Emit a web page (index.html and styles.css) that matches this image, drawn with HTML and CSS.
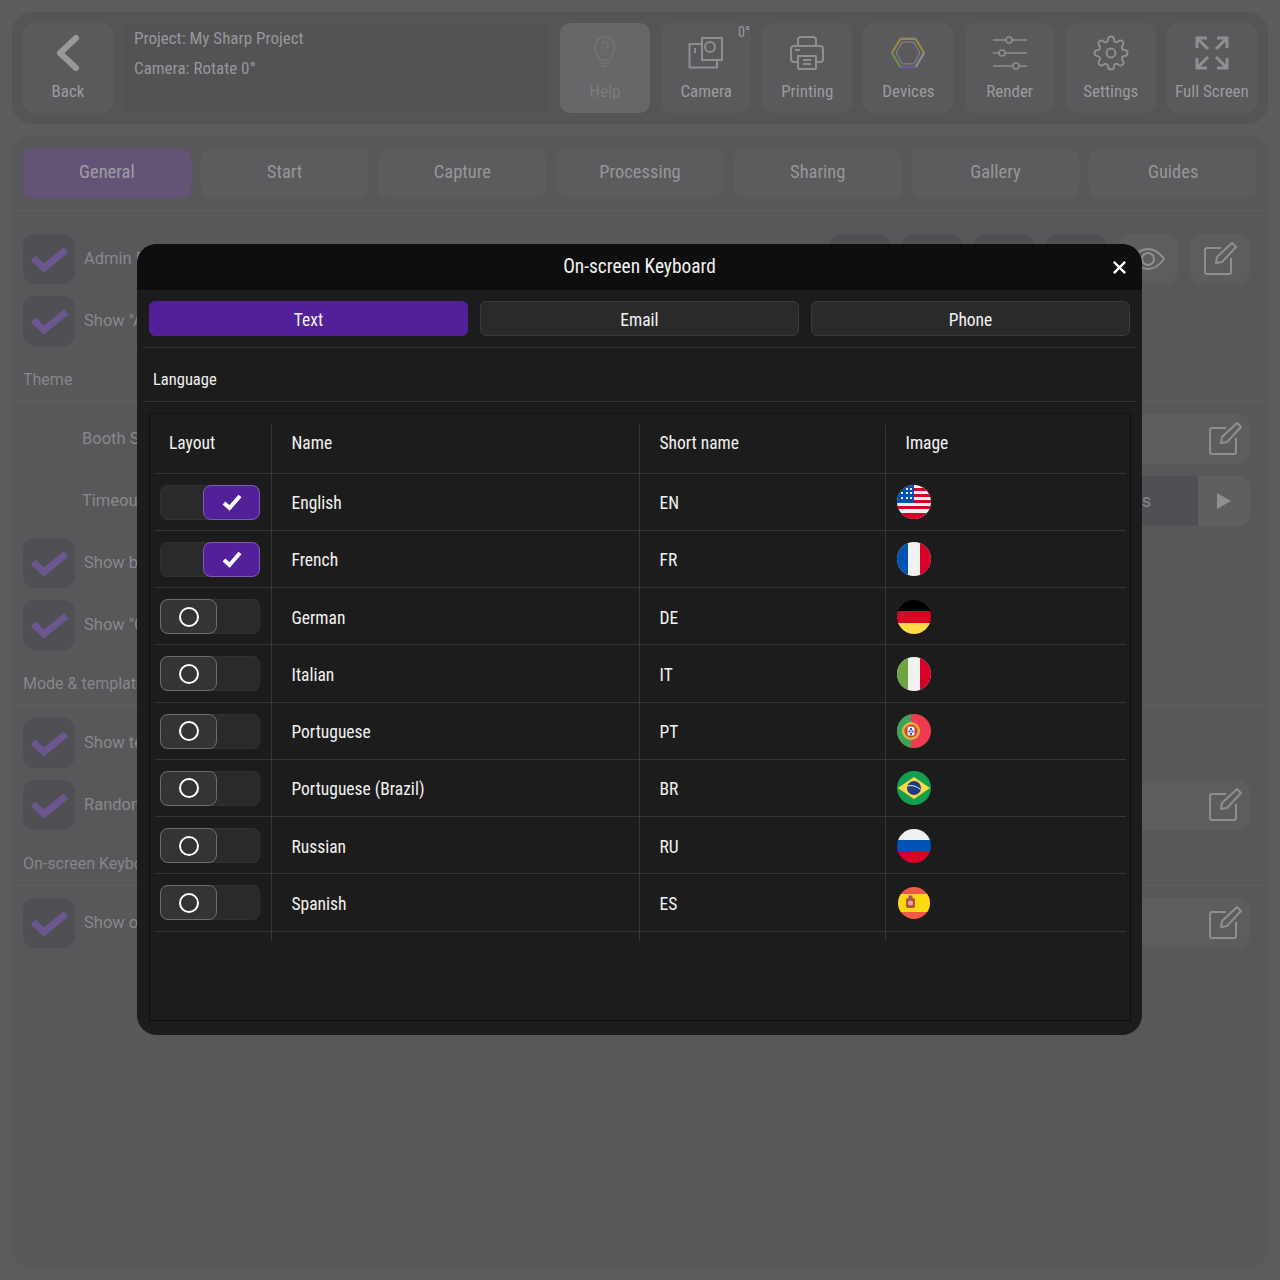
FILE: index.html
```html
<!DOCTYPE html>
<html lang="en">
<head>
<meta charset="utf-8">
<title>On-screen Keyboard</title>
<link rel="stylesheet" href="styles.css">
</head>
<body>
<div class="app">
  <header class="topbar">
    <div class="tool back">
      <svg class="ico" viewBox="0 0 36 36"><path d="M26 3 L10 18 L26 33" class="chev"/></svg>
      <span>Back</span>
    </div>
    <div class="info">
      <div>Project: My Sharp Project</div>
      <div>Camera: Rotate 0°</div>
    </div>
    <div class="tools">
      <div class="tool help">
        <svg class="ico" viewBox="0 0 36 36"><path d="M13 25c0-3-5-6-5-13a10 10 0 0 1 20 0c0 7-5 10-5 13z"/><path d="M13 28h10M14 31h8M18 31v3M15 9.500a3 3 0 1 1 4.500 3c-1 .7-1.500 1.300-1.500 2.500M18 18v1"/></svg>
        <span>Help</span>
      </div>
      <div class="tool">
        <svg class="ico" viewBox="0 0 36 36"><path d="M1.500 9h12.500V3h20v22h-5v7.500H1.500z"/><path d="M14 9v16h15M7 13v5"/><circle cx="22" cy="12" r="5"/></svg>
        <span>Camera</span>
        <em class="deg">0°</em>
      </div>
      <div class="tool">
        <svg class="ico" viewBox="0 0 36 36"><path d="M9 11V5a3 3 0 0 1 3-3h12a3 3 0 0 1 3 3v6"/><path d="M9 27H5a3 3 0 0 1-3-3V14a3 3 0 0 1 3-3h26a3 3 0 0 1 3 3v10a3 3 0 0 1-3 3h-4"/><path d="M9 21h18v12a1 1 0 0 1-1 1H10a1 1 0 0 1-1-1zM14 25h8M14 29h8M6 15h5"/></svg>
        <span>Printing</span>
      </div>
      <div class="tool">
        <svg class="ico hex" viewBox="-1 -1 38 38">
          <path class="h1" d="M10 3h16"/><path class="h2" d="M26 3l9 15"/><path class="h3" d="M35 18l-9 15"/><path class="h4" d="M26 33H10"/><path class="h5" d="M10 33L1 18"/><path class="h6" d="M1 18L10 3"/>
          <path class="h7" d="M12 6.500h12l6.500 11.500L24 29.500H12L5.500 18z"/>
        </svg>
        <span>Devices</span>
      </div>
      <div class="tool">
        <svg class="ico fine" viewBox="0 0 36 36"><path d="M1 5h13M20 5h15M1 18h6M13 18h22M1 31h20M27 31h8"/><circle cx="17" cy="5" r="3"/><circle cx="10" cy="18" r="3"/><circle cx="24" cy="31" r="3"/></svg>
        <span>Render</span>
      </div>
      <div class="tool">
        <svg class="ico" viewBox="0 0 24 24"><circle cx="12" cy="12" r="3" class="thin"/><path class="thin" d="M19.400 15a1.650 1.650 0 0 0 .33 1.820l.06.06a2 2 0 0 1 0 2.830 2 2 0 0 1-2.830 0l-.06-.06a1.650 1.650 0 0 0-1.820-.33 1.650 1.650 0 0 0-1 1.510V21a2 2 0 0 1-2 2 2 2 0 0 1-2-2v-.09A1.650 1.650 0 0 0 9 19.400a1.650 1.650 0 0 0-1.820.33l-.06.06a2 2 0 0 1-2.830 0 2 2 0 0 1 0-2.830l.06-.06a1.650 1.650 0 0 0 .33-1.820 1.650 1.650 0 0 0-1.510-1H3a2 2 0 0 1-2-2 2 2 0 0 1 2-2h.09A1.650 1.650 0 0 0 4.600 9a1.650 1.650 0 0 0-.33-1.820l-.06-.06a2 2 0 0 1 0-2.830 2 2 0 0 1 2.830 0l.06.06a1.650 1.650 0 0 0 1.820.33H9a1.650 1.650 0 0 0 1-1.510V3a2 2 0 0 1 2-2 2 2 0 0 1 2 2v.09a1.650 1.650 0 0 0 1 1.510 1.650 1.650 0 0 0 1.820-.33l.06-.06a2 2 0 0 1 2.830 0 2 2 0 0 1 0 2.830l-.06.06a1.650 1.650 0 0 0-.33 1.820V9a1.650 1.650 0 0 0 1.510 1H21a2 2 0 0 1 2 2 2 2 0 0 1-2 2h-.09a1.650 1.650 0 0 0-1.510 1z"/></svg>
        <span>Settings</span>
      </div>
      <div class="tool">
        <svg class="ico" viewBox="0 0 36 36"><path class="bold" d="M3 13V3h10M3 3l11 11M23 3h10v10M33 3L22 14M3 23v10h10M3 33l11-11M33 23v10H23M33 33L22 22"/></svg>
        <span>Full Screen</span>
      </div>
    </div>
  </header>

  <main class="settings">
    <nav class="tabs">
      <div class="tab active">General</div>
      <div class="tab">Start</div>
      <div class="tab">Capture</div>
      <div class="tab">Processing</div>
      <div class="tab">Sharing</div>
      <div class="tab">Gallery</div>
      <div class="tab">Guides</div>
    </nav>

    <section class="group first">
      <div class="row">
        <div class="check"><svg viewBox="0 0 52 50"><path d="M10 24l11 10 22-18"/></svg></div>
        <div class="label">Admin Panel</div>
        <div class="btn dark"></div><div class="btn dark"></div><div class="btn dark"></div><div class="btn dark"></div>
        <div class="btn"><svg class="ico sm" viewBox="0 0 36 36"><path d="M2 18c5-7 10-10 16-10s11 3 16 10c-5 7-10 10-16 10S7 25 2 18z"/><circle cx="18" cy="18" r="6"/></svg></div>
        <div class="btn"><svg class="ico sm" viewBox="0 0 36 36"><path d="M19 7H5a2 2 0 0 0-2 2v22a2 2 0 0 0 2 2h22a2 2 0 0 0 2-2V17"/><path d="M14 22l1-6L30 2l4 4-14 15z"/></svg></div>
      </div>
      <div class="row">
        <div class="check"><svg viewBox="0 0 52 50"><path d="M10 24l11 10 22-18"/></svg></div>
        <div class="label">Show "Admin"</div>
      </div>
    </section>

    <section class="group">
      <h2>Theme</h2>
      <div class="row">
        <div class="label plain">Booth Style</div>
        <div class="field"><svg class="ico sm" viewBox="0 0 36 36"><path d="M19 7H5a2 2 0 0 0-2 2v22a2 2 0 0 0 2 2h22a2 2 0 0 0 2-2V17"/><path d="M14 22l1-6L30 2l4 4-14 15z"/></svg></div>
      </div>
      <div class="row">
        <div class="label plain">Timeout</div>
        <div class="field timer"><span>s</span><div class="play"><svg viewBox="0 0 16 16"><path d="M1 0l14 8-14 8z"/></svg></div></div>
      </div>
      <div class="row">
        <div class="check"><svg viewBox="0 0 52 50"><path d="M10 24l11 10 22-18"/></svg></div>
        <div class="label">Show background</div>
      </div>
      <div class="row">
        <div class="check"><svg viewBox="0 0 52 50"><path d="M10 24l11 10 22-18"/></svg></div>
        <div class="label">Show "Gallery"</div>
      </div>
    </section>

    <section class="group">
      <h2>Mode &amp; templates</h2>
      <div class="row">
        <div class="check"><svg viewBox="0 0 52 50"><path d="M10 24l11 10 22-18"/></svg></div>
        <div class="label">Show templates</div>
      </div>
      <div class="row">
        <div class="check"><svg viewBox="0 0 52 50"><path d="M10 24l11 10 22-18"/></svg></div>
        <div class="label">Random</div>
        <div class="field"><svg class="ico sm" viewBox="0 0 36 36"><path d="M19 7H5a2 2 0 0 0-2 2v22a2 2 0 0 0 2 2h22a2 2 0 0 0 2-2V17"/><path d="M14 22l1-6L30 2l4 4-14 15z"/></svg></div>
      </div>
    </section>

    <section class="group">
      <h2>On-screen Keyboard</h2>
      <div class="row">
        <div class="check"><svg viewBox="0 0 52 50"><path d="M10 24l11 10 22-18"/></svg></div>
        <div class="label">Show on-screen keyboard</div>
        <div class="field"><svg class="ico sm" viewBox="0 0 36 36"><path d="M19 7H5a2 2 0 0 0-2 2v22a2 2 0 0 0 2 2h22a2 2 0 0 0 2-2V17"/><path d="M14 22l1-6L30 2l4 4-14 15z"/></svg></div>
      </div>
    </section>
  </main>
</div>

<div class="modal">
  <div class="modal-head">
    <span>On-screen Keyboard</span>
    <svg class="close" viewBox="0 0 16 16"><path d="M2 2l12 12M14 2L2 14"/></svg>
  </div>
  <div class="modal-tabs">
    <div class="mtab on">Text</div>
    <div class="mtab">Email</div>
    <div class="mtab">Phone</div>
  </div>
  <div class="lang-title">Language</div>
  <div class="table-box">
    <table>
      <colgroup><col class="c1"><col class="c2"><col class="c3"><col class="c4"></colgroup>
      <thead><tr><th>Layout</th><th>Name</th><th>Short name</th><th>Image</th></tr></thead>
      <tbody>
        <tr><td class="tg"><div class="switch yes"><i><svg viewBox="0 0 24 24"><path d="M4 13l5.500 5L20 6"/></svg></i></div></td><td>English</td><td>EN</td>
          <td class="fl"><svg class="flag" viewBox="0 0 34 34"><rect width="34" height="34" fill="#f0f0f0"/><path fill="#d80027" d="M0 3h34v3H0zM16 9h18v3H16zM16 15h18v3H16zM0 21h34v3H0zM0 28h34v6H0z"/><rect width="17" height="18" fill="#0052b4"/><path fill="#f0f0f0" d="M4 7h2v2H4zM9 3h2v2H9zM13 3h2v2h-2zM9 7h2v2H9zM13 7h2v2h-2zM4 12h2v2H4zM9 12h2v2H9zM13 12h2v2h-2z"/></svg></td></tr>
        <tr><td class="tg"><div class="switch yes"><i><svg viewBox="0 0 24 24"><path d="M4 13l5.500 5L20 6"/></svg></i></div></td><td>French</td><td>FR</td>
          <td class="fl"><svg class="flag" viewBox="0 0 34 34"><rect width="34" height="34" fill="#f0f0f0"/><rect width="11" height="34" fill="#0052b4"/><rect x="23" width="11" height="34" fill="#d80027"/></svg></td></tr>
        <tr><td class="tg"><div class="switch"><i><b></b></i></div></td><td>German</td><td>DE</td>
          <td class="fl"><svg class="flag" viewBox="0 0 34 34"><rect width="34" height="12" fill="#000"/><rect y="11" width="34" height="12" fill="#d80027"/><rect y="23" width="34" height="11" fill="#ffda44"/></svg></td></tr>
        <tr><td class="tg"><div class="switch"><i><b></b></i></div></td><td>Italian</td><td>IT</td>
          <td class="fl"><svg class="flag" viewBox="0 0 34 34"><rect width="34" height="34" fill="#f0f0f0"/><rect width="11" height="34" fill="#6da544"/><rect x="23" width="11" height="34" fill="#d80027"/></svg></td></tr>
        <tr><td class="tg"><div class="switch"><i><b></b></i></div></td><td>Portuguese</td><td>PT</td>
          <td class="fl"><svg class="flag" viewBox="0 0 34 34"><rect width="34" height="34" fill="#ef3b50"/><rect width="14" height="34" fill="#3aa55a"/><circle cx="14" cy="17" r="9" fill="#d8b838"/><circle cx="14" cy="17" r="6.500" fill="#d43a3a"/><rect x="10.500" y="12.500" width="7" height="9" rx="1.500" fill="#f0f0f0"/><path fill="#3c5aa0" d="M13 14h2v2h-2zM11.500 16.500h2v2h-2zM14.500 16.500h2v2h-2zM13 19h2v2h-2z"/></svg></td></tr>
        <tr><td class="tg"><div class="switch"><i><b></b></i></div></td><td>Portuguese (Brazil)</td><td>BR</td>
          <td class="fl"><svg class="flag" viewBox="0 0 34 34"><rect width="34" height="34" fill="#12a050"/><path fill="#ffda44" d="M17 6l16 11-16 11L1 17z"/><circle cx="17" cy="17" r="7" fill="#1f3a82"/><path d="M10.500 15c4-1 9 0 13 3.500" stroke="#f0f0f0" stroke-width="1" fill="none"/></svg></td></tr>
        <tr><td class="tg"><div class="switch"><i><b></b></i></div></td><td>Russian</td><td>RU</td>
          <td class="fl"><svg class="flag" viewBox="0 0 34 34"><rect width="34" height="12" fill="#f0f0f0"/><rect y="11" width="34" height="12" fill="#0052b4"/><rect y="23" width="34" height="11" fill="#d80027"/></svg></td></tr>
        <tr><td class="tg"><div class="switch"><i><b></b></i></div></td><td>Spanish</td><td>ES</td>
          <td class="fl"><svg class="flag" viewBox="0 0 34 34"><circle cx="17" cy="17" r="16" fill="#ee5a46"/><path fill="#ffd814" d="M3.800 8H30.200A16 16 0 0 1 30.200 26H3.800A16 16 0 0 1 3.800 8z"/><rect x="9" y="12" width="9" height="10" rx="2" fill="#b8503c"/><rect x="11.500" y="9.500" width="4" height="3.500" fill="#a0506a"/><circle cx="13.500" cy="17" r="2.500" fill="#d8a8a8"/></svg></td></tr>
        <tr class="tail"><td></td><td></td><td></td><td></td></tr>
      </tbody>
    </table>
  </div>
</div>
</body>
</html>
```
FILE: styles.css
```css
* { box-sizing: border-box; }
html, body { margin: 0; height: 100%; }
body {
  background: #5c5b5e;
  font-family: "Ubuntu Condensed", "Liberation Sans Narrow", "Roboto Condensed", "Liberation Sans", sans-serif;
  overflow: hidden;
}
.app {
  height: 1280px;
  padding: 12px;
  display: flex;
  flex-direction: column;
  gap: 12px;
}
.topbar {
  height: 112px;
  flex: none;
  background: #555457;
  border-radius: 20px;
  padding: 11px;
  display: flex;
  gap: 11px;
}
.tool {
  position: relative;
  width: 90px;
  height: 90px;
  flex: none;
  background: #5a595c;
  border-radius: 10px;
  display: flex;
  flex-direction: column;
  align-items: center;
  padding-top: 12px;
  gap: 10px;
  color: #9c9b9e;
  font-size: 17px;
  line-height: 20px;
}
.ico {
  width: 36px;
  height: 36px;
  flex: none;
  fill: none;
  stroke: #8f8e91;
  stroke-width: 2;
  stroke-linejoin: round;
}
.ico .thin { stroke-width: 1.300; }
.ico .bold { stroke-width: 3; stroke-linejoin: miter; }
.ico.fine { stroke-width: 1.500; }
.chev { stroke-width: 6; stroke-linecap: round; stroke-linejoin: round; stroke: #99989b; }
.info {
  width: 425px;
  flex: none;
  background: #535255;
  padding-left: 10px;
  color: #98979a;
  font-size: 17px;
  line-height: 30px;
}
.tools { flex: 1; display: flex; justify-content: space-between; }
.help { background: #676669; color: #7c7b7e; }
.help .ico { stroke: #747376; stroke-width: 1.500; }
.deg {
  position: absolute;
  right: 1px;
  top: 0;
  font-style: normal;
  font-size: 14px;
  line-height: 18px;
}
.hex { stroke-width: 2.500; }
.hex .h1 { stroke: #8f8768; }
.hex .h2 { stroke: #968546; }
.hex .h3 { stroke: #8a8a96; }
.hex .h4 { stroke: #6f5a96; }
.hex .h5 { stroke: #6f8a5a; }
.hex .h6 { stroke: #968546; }
.hex .h7 { stroke: #8f8e91; stroke-width: 1; }

.settings {
  flex: 1;
  background: #58575a;
  border-radius: 20px;
  padding: 12px 5px 0;
  display: flex;
  flex-direction: column;
}
.tabs {
  display: flex;
  gap: 10px;
  padding: 0 6px 12px;
  border-bottom: 1px solid #5f5e61;
}
.tab {
  flex: 1;
  height: 50px;
  padding-bottom: 2px;
  border-radius: 10px;
  background: #5c5b5e;
  color: #979699;
  font-size: 18.500px;
  display: flex;
  align-items: center;
  justify-content: center;
}
.tab.active { background: #635475; color: #a09ca6; }
.group {
  display: flex;
  flex-direction: column;
  gap: 12px;
}
.group.first { padding-top: 23px; }
.group h2 {
  margin: 0;
  height: 56px;
  padding: 20px 6px 0;
  border-bottom: 1px solid #5f5e61;
  font: 400 16px/28px "Roboto", sans-serif;
  color: #87868a;
}
.row {
  height: 50px;
  display: flex;
  align-items: center;
  gap: 12px;
  padding: 0 13px 0 6px;
}
.check {
  width: 52px;
  height: 50px;
  flex: none;
  border-radius: 12px;
  background: #504f53;
}
.check svg { display: block; fill: none; stroke: #6b5690; stroke-width: 7; }
.label {
  flex: 1;
  margin-left: -3px;
  font: 400 16.500px/24px "Roboto", sans-serif;
  color: #89888c;
}
.label.plain { margin-left: 59px; }
.btn {
  width: 60px;
  height: 50px;
  flex: none;
  border-radius: 12px;
  background: #5d5c5f;
  display: flex;
  align-items: center;
  justify-content: center;
}
.btn.dark { background: #504f53; }
.ico.sm { width: 36px; height: 36px; }
.field {
  width: 300px;
  height: 50px;
  flex: none;
  border-radius: 12px;
  background: #5d5c5f;
  display: flex;
  align-items: center;
  justify-content: flex-end;
  padding-right: 7px;
}
.field.timer {
  padding: 0;
  background: #504f53;
  justify-content: flex-end;
  overflow: hidden;
}
.field.timer span {
  flex: 1;
  text-align: right;
  padding-right: 47px;
  font: 400 18px/24px "Roboto", sans-serif;
  color: #89888c;
}
.play {
  width: 52px;
  height: 50px;
  background: #5f5e61;
  display: flex;
  align-items: center;
  justify-content: center;
}
.play svg { width: 16px; height: 16px; fill: #8f8e91; }

.modal {
  position: absolute;
  left: 137px;
  top: 244px;
  width: 1005px;
  height: 791px;
  background: #1c1c1c;
  border-radius: 20px;
  overflow: hidden;
  color: #f2f2f2;
  font-size: 17.500px;
}
.modal-head {
  position: relative;
  height: 46px;
  padding-bottom: 2px;
  background: #0e0e0e;
  display: flex;
  align-items: center;
  justify-content: center;
  font-size: 19.400px;
}
.close {
  position: absolute;
  right: 15px;
  top: 16px;
  width: 15px;
  height: 15px;
  fill: none;
  stroke: #fff;
  stroke-width: 2.500;
}
.modal-tabs {
  margin: 0 6px;
  padding: 11px 6px;
  display: flex;
  gap: 12px;
  border-bottom: 1px solid #363636;
}
.mtab {
  flex: 1;
  height: 35px;
  padding-top: 2px;
  border-radius: 6px;
  background: #2a2a2a;
  border: 1px solid #3a3a3a;
  display: flex;
  align-items: center;
  justify-content: center;
}
.mtab.on { background: #52219a; border-color: #52219a; }
.lang-title {
  margin: 0 6px;
  height: 54px;
  padding: 20px 10px 0;
  line-height: 24px;
  font-size: 16.500px;
  border-bottom: 1px solid #363636;
}
.table-box {
  margin: 11px 11px 0 12px;
  height: 608px;
  border: 1px solid #0f0f0f;
  border-top-color: #141414;
  padding: 11px 5px 0;
}
table {
  width: 971px;
  table-layout: fixed;
  border-collapse: collapse;
  font-size: 17.500px;
}
.c1 { width: 116px; }
.c2 { width: 368px; }
.c3 { width: 246px; }
th, td {
  padding: 0 0 0 20px;
  text-align: left;
  font-weight: 400;
  border-bottom: 1px solid #363636;
  border-right: 1px solid #363636;
}
th:last-child, td:last-child { border-right: 0; }
th { height: 48px; padding-bottom: 12px; }
th:first-child { padding-left: 14px; }
td { height: 57.250px; padding-top: 3px; }
.tail td { height: 10px; border-bottom: 0; padding: 0; }
td.tg { padding: 0 0 0 5px; }
td.fl { padding: 0 0 0 11px; }
.switch {
  width: 100px;
  height: 35px;
  border-radius: 7px;
  background: #2a2a2a;
  border: 1px solid #313131;
  position: relative;
  margin-top: 1px;
}
.switch i {
  position: absolute;
  left: -1px;
  top: -1px;
  width: 57px;
  height: 35px;
  border-radius: 8px;
  background: #343434;
  border: 1px solid #6c6c6c;
  display: flex;
  align-items: center;
  justify-content: center;
}
.switch b {
  width: 20px;
  height: 20px;
  border-radius: 50%;
  border: 2.500px solid #fff;
}
.switch.yes i {
  left: auto;
  right: -1px;
  background: #52219a;
  border-color: #7d5bb5;
}
.switch svg {
  width: 24px;
  height: 24px;
  fill: none;
  stroke: #fff;
  stroke-width: 4;
}
.flag {
  display: block;
  width: 34px;
  height: 34px;
  border-radius: 50%;
  margin-top: 1px;
}
```
